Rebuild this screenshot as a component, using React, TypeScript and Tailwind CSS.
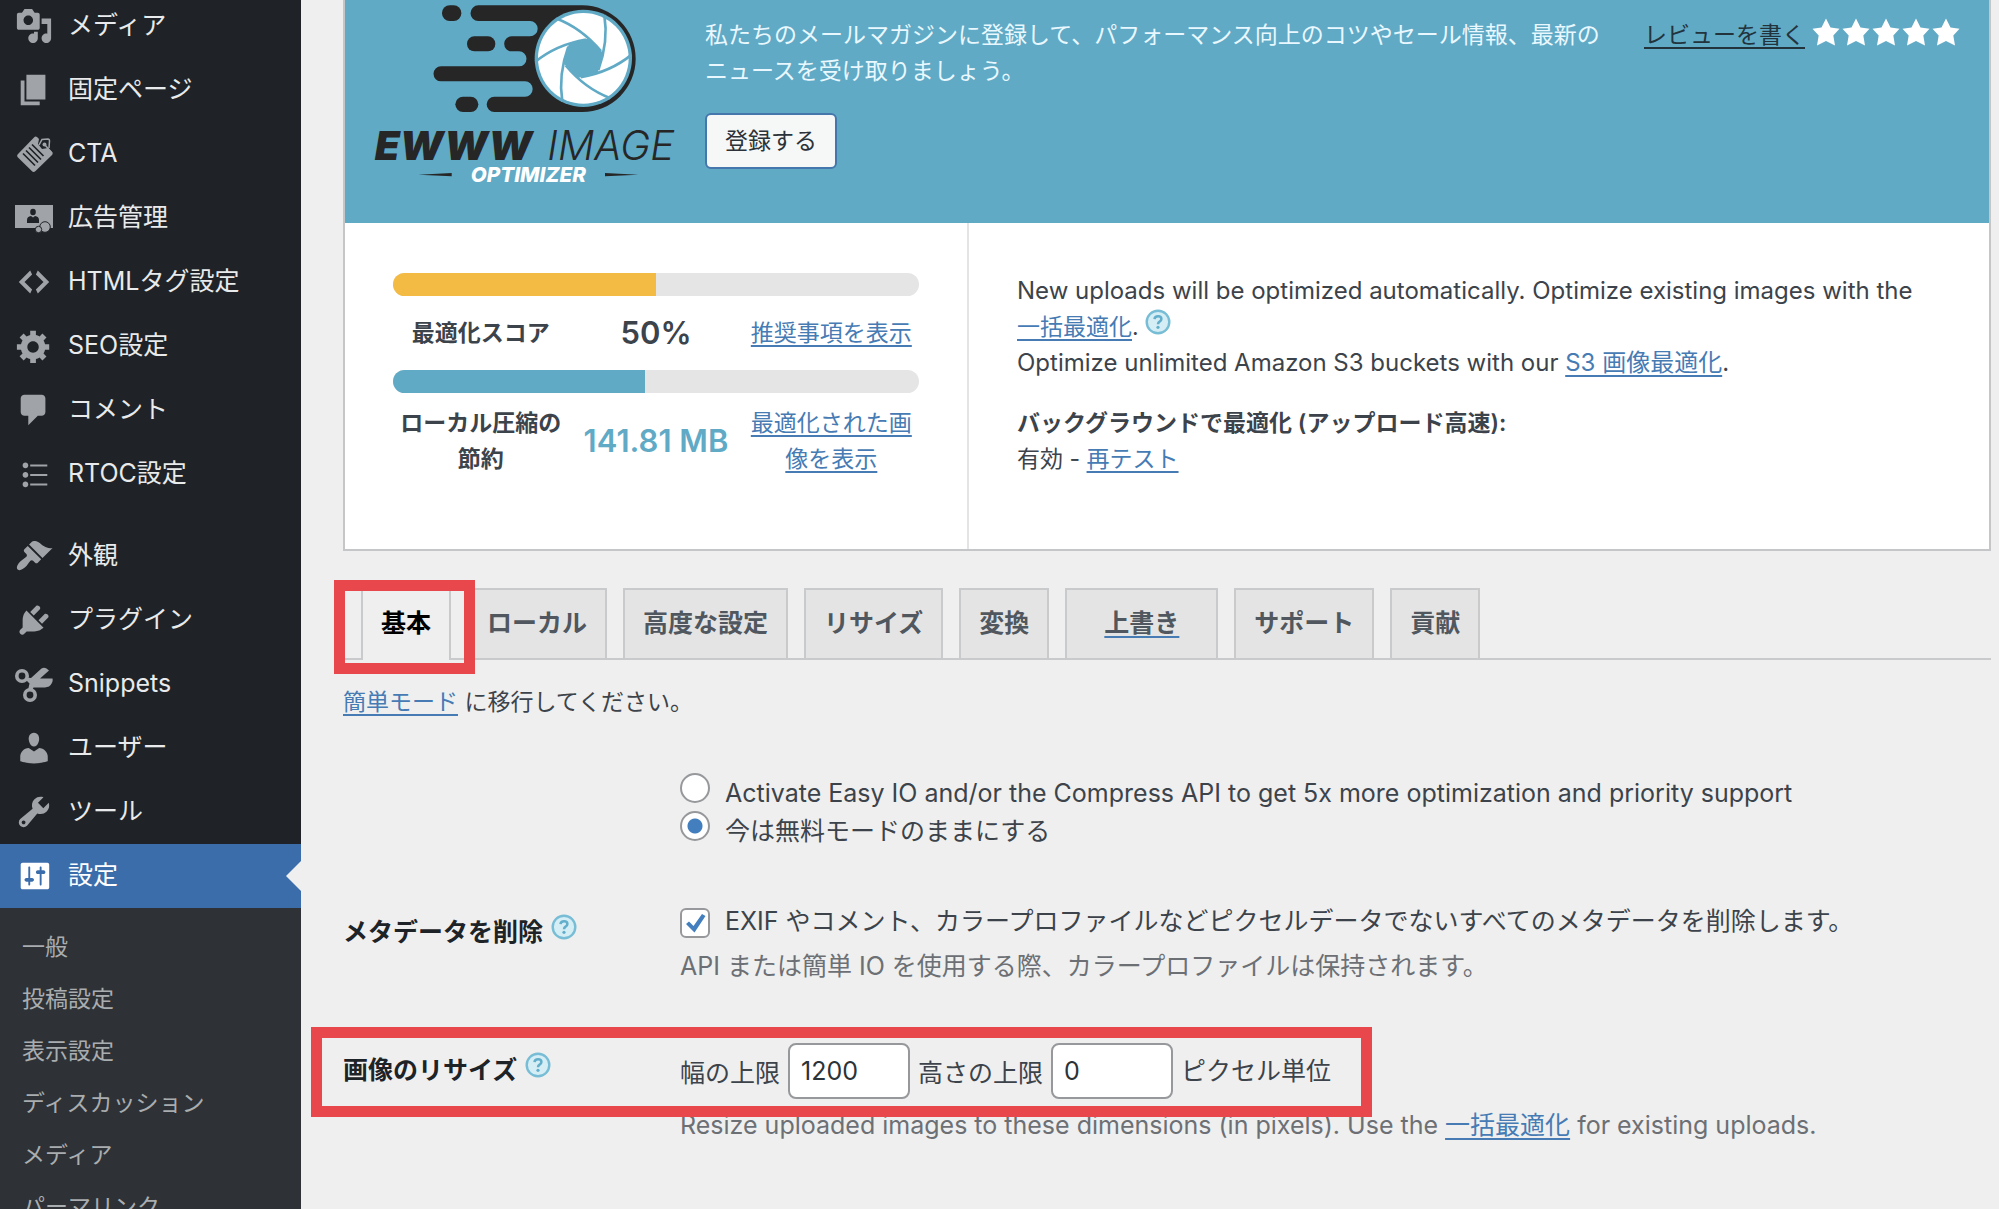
import React from "react";

type IconProps = { className?: string };

const paths = {
  media:
    "M13 11V4c0-.55-.45-1-1-1h-1.67L9 1H5L3.67 3H2c-.55 0-1 .45-1 1v7c0 .55.45 1 1 1h10c.55 0 1-.45 1-1zM7 4.5c1.38 0 2.5 1.12 2.5 2.5S8.38 9.5 7 9.5 4.5 8.38 4.5 7 5.62 4.5 7 4.5zM14 6h5v10.5c0 1.38-1.12 2.5-2.5 2.5S14 17.88 14 16.5s1.12-2.5 2.5-2.5c.17 0 .34.02.5.05V9h-3V6zm-4 8.05V13h2v3.5c0 1.38-1.12 2.5-2.5 2.5S7 17.88 7 16.5 8.12 14 9.5 14c.17 0 .34.02.5.05z",
  page: "M6 15V2h10v13H6zm-1 1h8v2H3V5h2v11z",
  code: "M9 6l-4 4 4 4-1 2-6-6 6-6zm2 8l4-4-4-4 1-2 6 6-6 6z",
  gear: "M18 12h-2.18c-.17.7-.44 1.35-.81 1.93l1.54 1.54-2.1 2.1-1.54-1.54c-.58.36-1.23.63-1.91.79V19H8v-2.18c-.68-.16-1.33-.43-1.91-.79l-1.54 1.54-2.12-2.12 1.54-1.54c-.36-.58-.63-1.23-.79-1.91H1V9.03h2.17c.16-.7.44-1.35.8-1.94L2.43 5.55l2.1-2.1 1.54 1.54c.58-.37 1.24-.64 1.93-.81V2h3v2.18c.68.16 1.33.43 1.91.79l1.54-1.54 2.12 2.12-1.54 1.54c.36.59.64 1.24.8 1.94H18V12zm-8.5 1.5c1.66 0 3-1.34 3-3s-1.34-3-3-3-3 1.34-3 3 1.34 3 3 3z",
  comment:
    "M5 2h9c1.1 0 2 .9 2 2v7c0 1.1-.9 2-2 2h-2l-5 5v-5H5c-1.1 0-2-.9-2-2V4c0-1.1.9-2 2-2z",
  list: "M5.5 7C4.67 7 4 6.33 4 5.5 4 4.68 4.67 4 5.5 4 6.32 4 7 4.68 7 5.5 7 6.33 6.32 7 5.5 7zM8 5h9v1H8V5zm-2.5 7c-.83 0-1.5-.67-1.5-1.5C4 9.68 4.67 9 5.5 9c.82 0 1.5.68 1.5 1.5 0 .83-.68 1.5-1.5 1.5zM8 10h9v1H8v-1zm-2.5 7c-.83 0-1.5-.67-1.5-1.5 0-.82.67-1.5 1.5-1.5.82 0 1.5.68 1.5 1.5 0 .83-.68 1.5-1.5 1.5zM8 15h9v1H8v-1z",
  brush:
    "M14.48 11.06L7.41 3.99l1.5-1.5c.5-.56 2.3-.47 3.51.32 1.21.8 1.43 1.28 2.91 2.1 1.18.64 2.45 1.26 4.45.85zm-.71.71L6.7 4.7 4.93 6.47c-.39.39-.39 1.02 0 1.41l1.06 1.06c.39.39.39 1.03 0 1.42-.6.6-1.43 1.11-2.21 1.69-.35.26-.7.53-1.01.84C1.43 14.23.4 16.08 1.4 17.07c.99 1 2.84-.03 4.18-1.36.31-.31.58-.66.85-1.02.57-.78 1.08-1.61 1.69-2.21.39-.39 1.02-.39 1.41 0l1.06 1.06c.39.39 1.02.39 1.41 0z",
  plug: "M13.11 4.36L9.87 7.6 8 5.73l3.24-3.24c.35-.34 1.05-.2 1.56.32.52.51.66 1.21.31 1.55zm-8 1.77l.91-1.12 9.01 9.01-1.19.84c-.71.71-2.63 1.16-3.82 1.16H6.14L4.9 17.26c-.59.59-1.54.59-2.12 0-.59-.58-.59-1.53 0-2.12l1.24-1.24v-3.88c0-1.13.4-3.19 1.09-3.89zm7.26 3.97l3.24-3.24c.34-.35 1.04-.21 1.55.31.52.51.66 1.21.31 1.55l-3.24 3.25z",
  user: "M10 9.25c-2.27 0-2.73-3.44-2.73-3.44C7 4.02 7.82 2 9.97 2c2.16 0 2.98 2.02 2.71 3.81 0 0-.41 3.44-2.68 3.44zm0 2.57L12.72 10c2.39 0 4.52 2.33 4.52 4.53v2.49s-3.65 1.13-7.24 1.13c-3.65 0-7.24-1.13-7.24-1.13v-2.49c0-2.25 1.94-4.48 4.47-4.48z",
  wrench:
    "M16.68 9.77c-1.34 1.34-3.3 1.67-4.95.99l-5.41 6.52c-.99.99-2.59.99-3.58 0s-.99-2.59 0-3.57l6.52-5.42c-.68-1.65-.35-3.61.99-4.95 1.28-1.28 3.12-1.62 4.72-1.06l-2.89 2.89 2.82 2.82 2.86-2.87c.53 1.58.18 3.39-1.08 4.65zM3.81 16.21c.4.39 1.04.39 1.43 0 .4-.4.4-1.04 0-1.43-.39-.4-1.03-.4-1.43 0-.39.39-.39 1.03 0 1.43z",
  sliders:
    "M18 16V4c0-.55-.45-1-1-1H4c-.55 0-1 .45-1 1v12c0 .55.45 1 1 1h13c.55 0 1-.45 1-1zM8 11h1c.55 0 1 .45 1 1s-.45 1-1 1H8v1.5c0 .28-.22.5-.5.5s-.5-.22-.5-.5V13H6c-.55 0-1-.45-1-1s.45-1 1-1h1V5.5c0-.28.22-.5.5-.5s.5.22.5.5V11zm5-2h-1c-.55 0-1-.45-1-1s.45-1 1-1h1V5.5c0-.28.22-.5.5-.5s.5.22.5.5V7h1c.55 0 1 .45 1 1s-.45 1-1 1h-1v5.5c0 .28-.22.5-.5.5s-.5-.22-.5-.5V9z",
  star: "M10 1l3 6 6 .75-4.12 4.62L16 19l-6-3-6 3 1.13-6.63L1 7.75 7 7z",
};

function Glyph({ name, className }: { name: keyof typeof paths } & IconProps) {
  return (
    <svg viewBox="0 0 20 20" className={className} fill="currentColor" aria-hidden="true">
      <path d={paths[name]} />
    </svg>
  );
}

/* Tilted tag with text lines and a looped string */
function TagIcon({ className }: IconProps) {
  return (
    <svg viewBox="0 0 38 38" className={className} aria-hidden="true">
      <path
        d="M19 2.500 Q20.500 .8 22 2 L24 4 L23 9 L27 14 L33 13 L37 17 Q38.400 18.500 37 20 L20.500 36 Q18.500 37.800 16.800 36 L3 22.500 Q1.200 20.800 3 19 Z"
        fill="currentColor"
      />
      <path d="M8 18.500 L20 30.500 M11 15.500 L23 27.500 M14 12.500 L26 24.500 M17 9.500 L28.500 21" stroke="#1f2327" strokeWidth="1.700" />
      <path d="M24 10 L27 4.500 L33 4 Q34.500 4 34.500 6 L34 13" fill="none" stroke="currentColor" strokeWidth="1.500" />
      <circle cx="29.500" cy="9.500" r="2" fill="currentColor" />
      <path d="M30 10 L37 18" stroke="currentColor" strokeWidth="1.500" />
    </svg>
  );
}

/* Bank note with a portrait and two coins */
function MoneyIcon({ className }: IconProps) {
  return (
    <svg viewBox="0 0 38 38" className={className} aria-hidden="true">
      <path d="M0 6h38v23H0z" fill="currentColor" />
      <ellipse cx="18" cy="13" rx="2.800" ry="3.300" fill="#1f2327" />
      <path d="M12 24v-3q0-3.500 4-4l2 1.500 2-1.500q4 .5 4 4v3z" fill="#1f2327" />
      <circle cx="30" cy="28" r="5.300" fill="currentColor" stroke="#1f2327" strokeWidth="1" />
      <circle cx="23.500" cy="30.500" r="3.200" fill="currentColor" stroke="#1f2327" strokeWidth="1" />
    </svg>
  );
}

function ScissorsIcon({ className }: IconProps) {
  return (
    <svg viewBox="0 0 38 38" className={className} aria-hidden="true">
      <g fill="none" stroke="currentColor" strokeWidth="3.600">
        <circle cx="7" cy="11" r="5.200" />
        <circle cx="15" cy="30" r="5.200" />
      </g>
      <path
        d="M11 12.500 L16 13 L26.500 3.500 Q29 1.800 31.500 3.500 L34 5.500 L25 13.500 H37.500 Q38.500 18 34 21.500 L30 22.500 H18.500 L16.500 26.500 L13 25 L14.500 18.500 L10.500 14.500 Z"
        fill="currentColor"
      />
    </svg>
  );
}

function HelpIcon() {
  return (
    <button type="button" aria-label="ヘルプ" className="block h-[26px] w-[26px]">
      <svg viewBox="0 0 26 26" className="h-[26px] w-[26px]" aria-hidden="true">
        <circle cx="13" cy="13" r="11.300" fill="#d5edf5" stroke="#77bdd5" strokeWidth="2.400" />
        <path d="M9.500 10.200 Q9.800 7.300 13 7.300 Q16.400 7.300 16.400 10 Q16.400 11.600 14.600 12.600 Q13 13.500 13 15.200" fill="none" stroke="#62aecb" strokeWidth="2.500" />
        <circle cx="13" cy="18.300" r="1.600" fill="#62aecb" />
      </svg>
    </button>
  );
}

function Logo() {
  return (
    <svg viewBox="120 0 960 570" className="h-[190px] w-[320px] shrink-0" role="img" aria-label="EWWW Image Optimizer">
      <g fill="#262626">
        <path d="M445 16H757A160 160 0 0 1 757 336H493a23 23 0 0 1 0-46H585a23 23 0 0 0 0-46H333a22 22 0 0 1 0-45H567a22 22 0 0 0 0-45H545a22 22 0 0 1 0-45H600a23 23 0 0 0 0-46H445a23 23 0 0 1 0-47Z" />
        <rect x="336" y="16" width="58" height="47" rx="23" />
        <rect x="411" y="109" width="85" height="45" rx="22" />
        <rect x="376" y="290" width="69" height="46" rx="23" />
        <path d="M265 524 L365 519 V529 Z" />
        <path d="M925 524 L825 519 V529 Z" />
      </g>
      <circle cx="760" cy="175" r="146" fill="#60aac6" />
      <circle cx="760" cy="175" r="136" fill="#fff" />
      <polygon points="820,160 803,219 743,234 700,190 717,130 777,115" fill="#60aac6" />
      <g fill="none" stroke="#60aac6" strokeWidth="8">
        {[0, 60, 120, 180, 240, 300].map((a) => (
          <path key={a} d="M823 45Q836 125 805 210" transform={`rotate(${a} 760 175)`} />
        ))}
      </g>
      <text x="134" y="480" fill="#262626" fontFamily="Inter" fontWeight="900" fontStyle="italic" fontSize="121">EWWW</text>
      <text x="652" y="480" fill="#262626" fontFamily="Inter" fontWeight="300" fontStyle="italic" fontSize="121">IMAGE</text>
      <text x="595" y="545" fill="#fff" fontFamily="Inter" fontWeight="800" fontStyle="italic" fontSize="62" textAnchor="middle">OPTIMIZER</text>
    </svg>
  );
}

const iconBox = "h-[38px] w-[38px] shrink-0";

const menuTop = [
  { label: "メディア", icon: <Glyph name="media" className={iconBox} /> },
  { label: "固定ページ", icon: <Glyph name="page" className={iconBox} /> },
  { label: "CTA", icon: <TagIcon className={iconBox} /> },
  { label: "広告管理", icon: <MoneyIcon className={iconBox} /> },
  { label: "HTMLタグ設定", icon: <Glyph name="code" className={iconBox} /> },
  { label: "SEO設定", icon: <Glyph name="gear" className={iconBox} /> },
  { label: "コメント", icon: <Glyph name="comment" className={iconBox} /> },
  { label: "RTOC設定", icon: <Glyph name="list" className={iconBox} /> },
];

const menuBottom = [
  { label: "外観", icon: <Glyph name="brush" className={iconBox} /> },
  { label: "プラグイン", icon: <Glyph name="plug" className={iconBox} /> },
  { label: "Snippets", icon: <ScissorsIcon className={iconBox} /> },
  { label: "ユーザー", icon: <Glyph name="user" className={iconBox} /> },
  { label: "ツール", icon: <Glyph name="wrench" className={iconBox} /> },
];

const submenu = ["一般", "投稿設定", "表示設定", "ディスカッション", "メディア", "パーマリンク"];

function MenuItem({ label, icon }: { label: string; icon: React.ReactNode }) {
  return (
    <li>
      <a href="#" className="flex h-16 items-center gap-[15px] pl-[15px] text-[25px] text-[#e9eaeb]">
        <span className="text-[#a0a4a8]">{icon}</span>
        {label}
      </a>
    </li>
  );
}

function Sidebar() {
  return (
    <nav className="w-[301px] shrink-0 bg-[#1f2327]">
      <ul className="-mt-[6px]">
        {menuTop.map((m) => (
          <MenuItem key={m.label} {...m} />
        ))}
      </ul>
      <ul className="mt-[18px]">
        {menuBottom.map((m) => (
          <MenuItem key={m.label} {...m} />
        ))}
        <li>
          <a href="#" aria-current="page" className="relative flex h-16 items-center gap-[15px] bg-[#3b6dab] pl-[15px] text-[25px] text-white">
            <Glyph name="sliders" className={iconBox} />
            設定
            <span className="absolute top-1/2 right-0 h-0 w-0 -translate-y-1/2 border-y-[15px] border-r-[15px] border-y-transparent border-r-[#efefef]" />
          </a>
          <ul className="bg-[#2e3236] pt-[13px]">
            {submenu.map((s) => (
              <li key={s}>
                <a href="#" className="flex h-[52px] items-center pl-[22px] text-[23px] text-[#aaadb0]">
                  {s}
                </a>
              </li>
            ))}
          </ul>
        </li>
      </ul>
    </nav>
  );
}

function Link({ children }: { children: React.ReactNode }) {
  return (
    <a href="#" className="text-[#467bb4] underline decoration-2 underline-offset-4">
      {children}
    </a>
  );
}

function Bar({ value, color, label }: { value: number; color: string; label: string }) {
  return (
    <div role="progressbar" aria-label={label} aria-valuenow={value} className="h-[23px] overflow-hidden rounded-full bg-[#e5e5e5]">
      <div className={`h-full ${color}`} style={{ width: `${value}%` }} />
    </div>
  );
}

function Panel() {
  return (
    <section className="border-x-2 border-b-2 border-[#c5c6c8] bg-white">
      <header className="flex h-[223px] items-start bg-[#60aac6] pr-7 pl-[25px]">
        <Logo />
        <div className="mr-8 ml-[15px] flex-1 pt-[17px]">
          <p className="text-[23px] leading-9 text-[#e9f8ff]">
            私たちのメールマガジンに登録して、パフォーマンス向上のコツやセール情報、最新のニュースを受け取りましょう。
          </p>
          <button type="button" className="mt-6 h-14 rounded-md border-2 border-[#4577ac] bg-[#f6f7f7] px-[18px] text-[23px] text-[#2c3338]">
            登録する
          </button>
        </div>
        <div className="flex shrink-0 items-start gap-[6px] pt-[17px] text-[23px] leading-9">
          <a href="#" className="text-[#23333c] underline decoration-2 underline-offset-4">レビューを書く</a>
          <span className="flex text-white" role="img" aria-label="5つ星">
            {[1, 2, 3, 4, 5].map((n) => (
              <Glyph key={n} name="star" className="h-[30px] w-[30px]" />
            ))}
          </span>
        </div>
      </header>
      <div className="flex h-[326px] text-[23px] leading-9 text-[#3c434a]">
        <div className="w-[624px] shrink-0 border-r-2 border-[#e4e4e5] px-12 pt-[50px]">
          <Bar value={50} color="bg-[#f3bb43]" label="最適化スコア" />
          <div className="grid grid-cols-3 items-center py-[19px] text-center">
            <span className="font-semibold">最適化スコア</span>
            <strong className="text-[31px] font-semibold">50%</strong>
            <Link>推奨事項を表示</Link>
          </div>
          <Bar value={48} color="bg-[#60aac6]" label="ローカル圧縮の節約" />
          <div className="grid grid-cols-3 items-center pt-3 text-center">
            <span className="px-1 font-semibold">ローカル圧縮の節約</span>
            <strong className="text-[31px] font-semibold whitespace-nowrap text-[#60aac6]">141.81 MB</strong>
            <span className="px-[6px]">
              <Link>最適化された画像を表示</Link>
            </span>
          </div>
        </div>
        <div className="flex-1 px-12 pt-[50px]">
          <p className="text-[24px]">New uploads will be optimized automatically. Optimize existing images with the</p>
          <div className="flex items-start gap-[6px]">
            <span>
              <Link>一括最適化</Link>.
            </span>
            <HelpIcon />
          </div>
          <p className="text-[24px]">
            Optimize unlimited Amazon S3 buckets with our <Link>S3 画像最適化</Link>.
          </p>
          <p className="mt-6 font-semibold">バックグラウンドで最適化 (アップロード高速):</p>
          <p>
            有効 - <Link>再テスト</Link>
          </p>
        </div>
      </div>
    </section>
  );
}

const tabs = ["ローカル", "高度な設定", "リサイズ", "変換", "上書き", "サポート", "貢献"];

function Tabs() {
  return (
    <div role="tablist" className="mt-[37px] flex gap-4 border-b-2 border-[#c9cacb] pl-[18px] text-[25px] font-semibold">
      <div className="relative">
        <button type="button" role="tab" aria-selected="true" className="-mb-[2px] h-[72px] border-x-2 border-[#c9cacb] bg-[#efefef] px-[18px] text-black">
          基本
        </button>
        <span className="pointer-events-none absolute -top-2 -right-6 -bottom-4 -left-[27px] border-[11px] border-[#e8474c]" />
      </div>
      {tabs.map((t) => (
        <button
          key={t}
          type="button"
          role="tab"
          aria-selected="false"
          className={
            t === "上書き"
              ? "h-[70px] border-2 border-b-0 border-[#c9cacb] bg-[#e4e4e4] px-[37px] text-[#50575e] underline decoration-[#467bb4] decoration-2 underline-offset-4"
              : "h-[70px] border-2 border-b-0 border-[#c9cacb] bg-[#e4e4e4] px-[18px] text-[#50575e]"
          }
        >
          {t}
        </button>
      ))}
    </div>
  );
}

const radioClass =
  "h-[30px] w-[30px] shrink-0 appearance-none rounded-full border-2 border-[#96989b] bg-white bg-clip-padding checked:bg-[radial-gradient(circle,#437ebf_0_7px,#ffffff_8px)]";

const inputClass =
  "h-14 w-[122px] rounded-lg border-2 border-[#96989b] bg-white px-[11px] text-[#2c3338]";

function Form() {
  return (
    <form className="text-[25px] leading-9 text-[#3c434a]">
      <fieldset className="mt-[53px] grid grid-cols-[337px_1fr] leading-10">
        <div className="col-start-2">
          <label className="flex h-[38px] items-start gap-[15px]">
            <input type="radio" name="mode" className={radioClass} />
            Activate Easy IO and/or the Compress API to get 5x more optimization and priority support
          </label>
          <label className="flex h-[38px] items-start gap-[15px]">
            <input type="radio" name="mode" defaultChecked className={radioClass} />
            今は無料モードのままにする
          </label>
        </div>
      </fieldset>

      <div className="mt-[54px] grid grid-cols-[337px_1fr]">
        <div className="flex gap-2 pt-[11px] font-semibold text-[#1d2327]">
          <label htmlFor="metadata">メタデータを削除</label>
          <HelpIcon />
        </div>
        <div>
          <div className="flex items-center gap-[15px]">
            <span className="relative mt-1 h-[30px] w-[30px]">
              <input id="metadata" type="checkbox" defaultChecked className="peer block h-[30px] w-[30px] appearance-none rounded-md border-2 border-[#96989b] bg-white" />
              <svg viewBox="0 0 30 30" className="pointer-events-none absolute inset-0 hidden peer-checked:block" aria-hidden="true">
                <path d="M6 16 L9 13.500 L13.500 18 L22 6 L25.500 8 L14.500 24.500 Z" fill="#437ebf" />
              </svg>
            </span>
            <label htmlFor="metadata">EXIF やコメント、カラープロファイルなどピクセルデータでないすべてのメタデータを削除します。</label>
          </div>
          <p className="mt-[9px] text-[#6c7075]">API または簡単 IO を使用する際、カラープロファイルは保持されます。</p>
        </div>
      </div>

      <div className="relative mt-[59px] grid grid-cols-[337px_1fr]">
        <div className="flex gap-2 pt-[9px] font-semibold text-[#1d2327]">
          <span>画像のリサイズ</span>
          <HelpIcon />
        </div>
        <div className="flex items-center gap-2">
          <label htmlFor="max-width" className="pt-1">幅の上限</label>
          <input id="max-width" type="text" defaultValue="1200" className={inputClass} />
          <label htmlFor="max-height" className="pt-1">高さの上限</label>
          <input id="max-height" type="text" defaultValue="0" className={inputClass} />
          <span>ピクセル単位</span>
        </div>
        <span className="pointer-events-none absolute -top-4 -bottom-[18px] -left-8 w-[1061px] border-[11px] border-[#e8474c]" />
      </div>
      <p className="mt-2 ml-[337px] text-[#6c7075]">
        Resize uploaded images to these dimensions (in pixels). Use the <Link>一括最適化</Link> for existing uploads.
      </p>
    </form>
  );
}

export default function App() {
  return (
    <div lang="ja" className="flex h-screen overflow-hidden bg-[#efefef] font-['Inter','Noto_Sans_CJK_JP',sans-serif]">
      <Sidebar />
      <main className="min-w-0 flex-1 pr-2 pl-[42px]">
        <Panel />
        <Tabs />
        <p className="mt-6 text-[23px] leading-9 text-[#3c434a]">
          <Link>簡単モード</Link> に移行してください。
        </p>
        <Form />
      </main>
    </div>
  );
}
